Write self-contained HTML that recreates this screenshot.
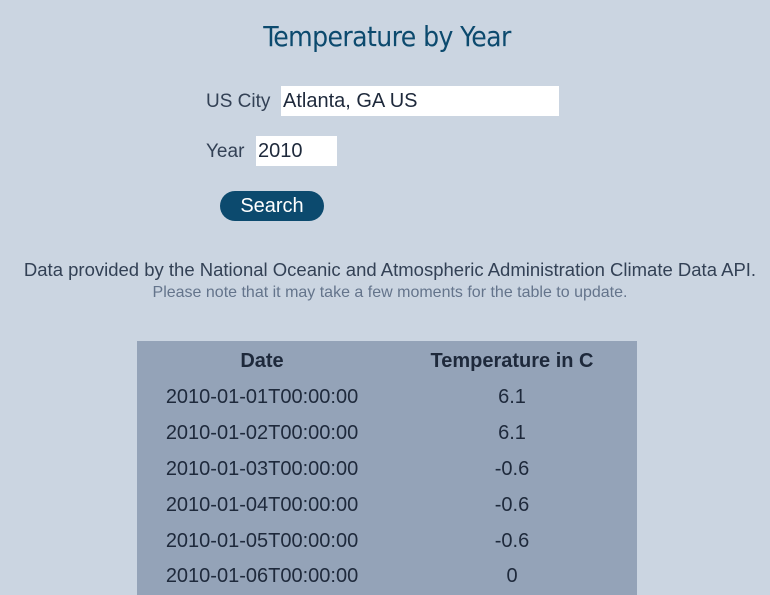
<!DOCTYPE html>
<html><head><style>
body{margin:0;width:770px;height:589px;background:#cbd5e1;font-family:"Liberation Sans","DejaVu Sans",sans-serif;color:#334155;overflow:hidden;position:relative}
.a{position:absolute;white-space:nowrap}
h1{position:absolute;left:0;width:774px;top:20px;margin:0;text-align:center;font-size:28px;font-weight:normal;color:#0c4a6e;font-family:"DejaVu Sans Condensed","DejaVu Sans",sans-serif;letter-spacing:-0.6px}
.lbl{font-size:19px}
.inp{background:#fff;height:30px;font-size:20px;line-height:30px;padding-left:2px;color:#1e293b}
.btn{left:220px;top:191px;width:104px;height:30px;border-radius:15px;background:#0c4a6e;color:#fff;font-size:20px;text-align:center;line-height:30px}
table{position:absolute;left:137px;top:341px;width:500px;background:#94a3b8;border-collapse:collapse;color:#1e293b;font-size:20px}
td,th{text-align:center;height:35.8px;padding:0}
th{font-weight:bold;font-size:20px;color:#1e293b;height:37px;padding-top:2px}
td:first-child,th:first-child{width:250px}
</style></head><body>
<h1>Temperature by Year</h1>
<div class="a lbl" style="left:206px;top:91px">US City</div>
<div class="a inp" style="left:281px;top:86px;width:276px">Atlanta, GA US</div>
<div class="a lbl" style="left:206px;top:141px">Year</div>
<div class="a inp" style="left:256px;top:136px;width:79px">2010</div>
<div class="a btn">Search</div>
<div class="a" style="left:0;width:780px;text-align:center;top:259px;font-size:18.5px;color:#334155">Data provided by the National Oceanic and Atmospheric Administration Climate Data API.</div>
<div class="a" style="left:0;width:780px;text-align:center;top:284px;font-size:16px;color:#64748b">Please note that it may take a few moments for the table to update.</div>
<table>
<tr><th>Date</th><th>Temperature in C</th></tr>
<tr><td>2010-01-01T00:00:00</td><td>6.1</td></tr>
<tr><td>2010-01-02T00:00:00</td><td>6.1</td></tr>
<tr><td>2010-01-03T00:00:00</td><td>-0.6</td></tr>
<tr><td>2010-01-04T00:00:00</td><td>-0.6</td></tr>
<tr><td>2010-01-05T00:00:00</td><td>-0.6</td></tr>
<tr><td>2010-01-06T00:00:00</td><td>0</td></tr>
</table>
</body></html>
